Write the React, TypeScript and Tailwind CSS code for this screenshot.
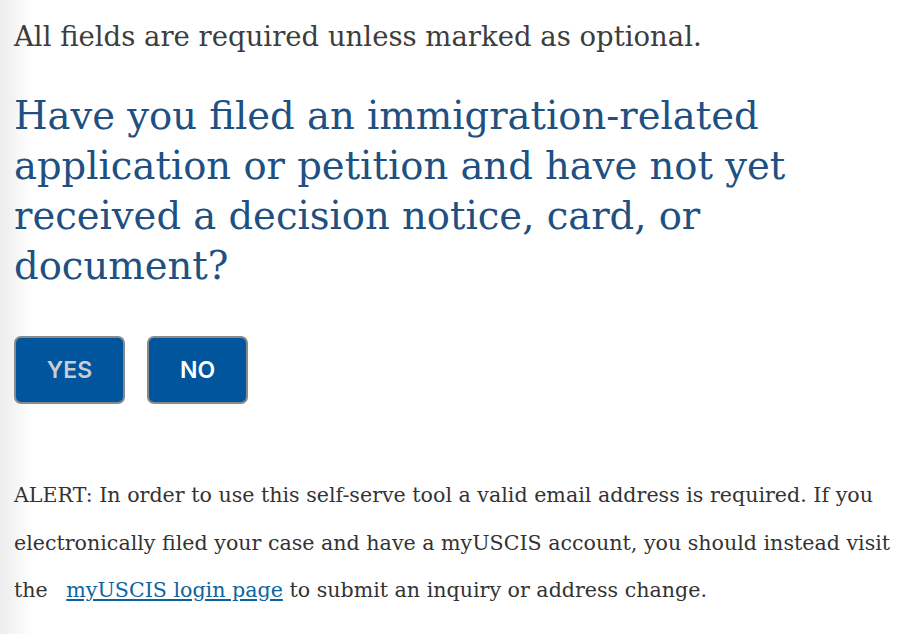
export default function App() {
  return (
    <div className="min-h-[634px] w-full bg-[linear-gradient(to_right,#ececec_0px,#ffffff_32px)] px-[14px] pt-[18px] font-['DejaVu_Serif',serif]">
      <p className="text-[27.5px] leading-[36px] text-[#3d3d3d]">All fields are required unless marked as optional.</p>
      <h1 className="mt-[37px] max-w-[800px] text-[38.5px] leading-[50px] text-[#205081]">
        Have you filed an immigration-related application or petition and have not yet received a decision notice, card, or document?
      </h1>
      <div className="mt-[45px] flex gap-[22px] font-['Inter',sans-serif]">
        <button className="h-[68px] w-[111px] rounded-[7px] border-2 border-[#8a8a8a] bg-[#00559c] text-[23px] font-semibold text-[#c9cdd3]">
          YES
        </button>
        <button className="h-[68px] w-[101px] rounded-[7px] border-2 border-[#8a8a8a] bg-[#00559c] text-[23px] font-semibold text-white">
          NO
        </button>
      </div>
      <p className="mt-[68px] whitespace-nowrap text-[20.6px] leading-[47.5px] text-[#333333]">
        ALERT: In order to use this self-serve tool a valid email address is required. If you
        <br />
        electronically filed your case and have a myUSCIS account, you should instead visit
        <br />
        the{' '}
        <a href="#" className="ml-[12px] text-[#0b64a0] underline">myUSCIS login page</a> to submit an inquiry or address change.
      </p>
    </div>
  );
}
